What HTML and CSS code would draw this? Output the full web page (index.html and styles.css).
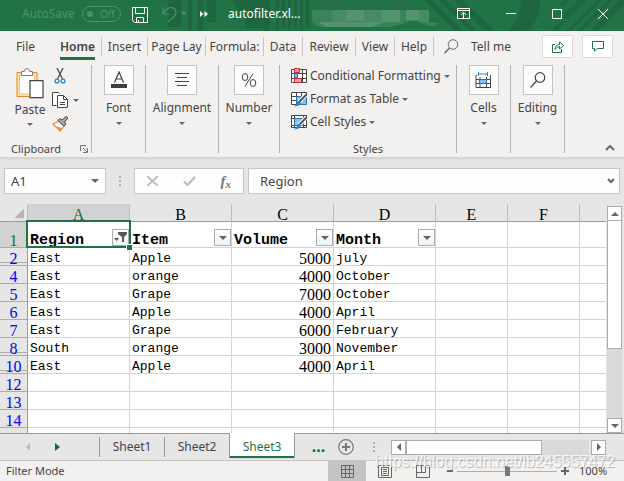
FILE: index.html
```html
<!DOCTYPE html>
<html lang="en">
<head>
<meta charset="utf-8">
<title>autofilter.xlsx</title>
<link rel="stylesheet" href="styles.css">
</head>
<body>
<div class="app">
  <header class="titlebar">
    <svg class="titlebar-art" width="624" height="31" viewBox="0 0 624 31" aria-hidden="true">
      <g fill="#1e6540">
        <path d="M168 0h13v27h-13zM188 0h4v31h-4zM198 0h5v31h-5zM207 0h9v22h-9zM232 0h32v28h-16zM264 0h6v31h-6zM276 0h3v31h-3zM282 0h3v28h-3zM288 0h3v31h-3zM294 0h3v28h-3zM300 0h3v31h-3zM306 0h3v28h-3z"/>
        <path d="M424 0h8l31 31h-8zM439 0h7l31 31h-7zM454 0h8l33 31h-9zM521 0h19q0 20-12 31h-19q12-14 12-31z"/>
        <path d="M597 0h5l-31 31h-5zM608 0h5l-31 31h-6zM619 0h5v5l-26 26h-7zM565 0h4l-7 7h-5zM578 0h8l-18 18h-8zM551 31l10-10h5l-9 10z"/>
      </g>
      <g>
        <path fill="#3b845b" d="M312 10h117v12l10 1q-4 4-10 3-8-3-13-5-8 0-14 3l-12 3h-68q-8-2-10-6z"/>
        <path fill="#56936f" d="M346 10h18v11h-18zM382 10h18v12h-18zM406 10h13v10h-13z"/>
        <path fill="#458b64" d="M332 10h14v12h-14zM364 10h18v12h-18zM419 10h10v12h-10z"/>
        <path fill="#529370" d="M318 22h66l-12 5h-46z"/>
        <path fill="#286f49" d="M324 0h20v9h-20zM358 0h15v9h-15zM393 0h14v9h-14z"/>
      </g>
    </svg>
    <div class="autosave"><span>AutoSave</span><button class="toggle" type="button" disabled><i class="knob"></i>Off</button></div>
    <button class="bare save" type="button" aria-label="Save">
      <svg width="16" height="16" viewBox="0 0 16 16" fill="none" stroke="#fff"><path d="M.5 .5h15v15h-13l-2-2zM3.500 .5v6h9v-6M4.500 15.500v-5h7v5M6.500 13v2.500"/></svg>
    </button>
    <button class="bare undo" type="button" disabled aria-label="Undo">
      <svg width="25" height="17" viewBox="0 0 25 17" fill="none" stroke="#509069"><path stroke-width="1.200" d="M1 1v7h7M1.300 7.500Q5 1 10 1.600q4 .8 4 5Q14 10 6 16"/><path fill="#509069" stroke="none" d="M19 6h6l-3 3z"/></svg>
    </button>
    <button class="bare more" type="button" aria-label="More commands">
      <svg width="8" height="6" viewBox="0 0 8 6" fill="#fff"><path d="M0 0l3.500 3L0 6zM4.500 0L8 3 4.500 6z"/></svg>
    </button>
    <span class="doc">autofilter.xl...</span>
    <div class="window-buttons">
      <button class="bare" type="button" aria-label="Ribbon display options"><svg width="13" height="11" viewBox="0 0 13 11" fill="none" stroke="#fff"><path d="M.5 .5h12v10H.5zM.5 2.500h12M6.500 10V4.500M4 6.800l2.500-2.500L9 6.800"/></svg></button>
      <button class="bare" type="button" aria-label="Minimize"><svg width="10" height="10" viewBox="0 0 10 10" stroke="#fff"><path d="M0 4.500h10"/></svg></button>
      <button class="bare" type="button" aria-label="Maximize"><svg width="10" height="10" viewBox="0 0 10 10" fill="none" stroke="#fff"><path d="M.5 .5h9v9h-9z"/></svg></button>
      <button class="bare" type="button" aria-label="Close"><svg width="10" height="10" viewBox="0 0 10 10" stroke="#fff"><path d="M0 0l10 10M10 0L0 10"/></svg></button>
    </div>
  </header>

  <nav class="tabs">
    <button class="tab file" type="button">File</button>
    <button class="tab active" type="button"><span>Home</span></button>
    <button class="tab" type="button">Insert</button>
    <button class="tab" type="button">Page Lay</button>
    <button class="tab" type="button">Formula:</button>
    <button class="tab" type="button">Data</button>
    <button class="tab" type="button">Review</button>
    <button class="tab" type="button">View</button>
    <button class="tab" type="button">Help</button>
    <button class="tellme" type="button">
      <svg width="15" height="15" viewBox="0 0 15 15" fill="none" stroke="#666"><circle cx="9" cy="5.500" r="4.800"/><path stroke-width="1.400" d="M5.500 9L.5 14.300"/></svg>
      Tell me
    </button>
    <div class="actions">
      <button class="pill" type="button" aria-label="Share"><svg width="12" height="13" viewBox="0 0 12 13" fill="none" stroke="#217346"><path d="M3 4.500H.5v8h9V9M3 9.500q0-4.500 4.500-5V2l4 3.500L7.500 9V6.500Q5 6.500 3 9.500z"/></svg></button>
      <button class="pill" type="button" aria-label="Comments"><svg width="12" height="11" viewBox="0 0 12 11" fill="none" stroke="#217346"><path d="M.5 .5h11v7H5.500L2.500 10V7.500h-2z"/></svg></button>
    </div>
  </nav>

  <section class="ribbon">
    <div class="group clipboard">
      <div class="clip-body">
        <button class="bare paste" type="button">
          <svg width="28" height="31" viewBox="0 0 28 31"><path fill="#fde3a6" stroke="#e8832c" d="M1 4.500h20v24H1z"/><path fill="#fcfcfb" stroke="#f3c476" d="M3.500 7h15v19h-15z"/><path fill="#fff" stroke="#777" d="M5.500 7.500v-4h3q0-3 2.500-3t2.500 3h3v4z"/><path fill="#fff" stroke="#444" stroke-width="1.200" d="M14 12.600h13v17H14z"/></svg>
          <span>Paste</span><i class="caret"></i>
        </button>
        <div class="clip-tools">
          <button class="bare" type="button" aria-label="Cut"><svg width="16" height="16" viewBox="0 0 16 16" fill="none"><path stroke="#555" stroke-width="1.400" d="M5 0l5.500 11M11 0L5.500 11"/><circle cx="5" cy="13" r="1.900" stroke="#1e86cc" stroke-width="1.300"/><circle cx="11" cy="13" r="1.900" stroke="#1e86cc" stroke-width="1.300"/></svg></button>
          <button class="bare" type="button" aria-label="Copy"><svg width="17" height="16" viewBox="0 0 17 16" fill="#fff" stroke="#444"><path d="M4.500 13.500h-4V.5h6l1 1"/><path d="M5.500 3.500h6l4 4v8h-10z"/><path d="M11.500 3.500v4h4M8 10.500h5M8 12.500h5" fill="none"/></svg><i class="caret"></i></button>
          <button class="bare" type="button" aria-label="Format painter"><svg width="17" height="16" viewBox="0 0 17 16"><path fill="#fff" stroke="#ea873c" stroke-width="1.200" d="M1 8l6-3 5 5-4 5z"/><path fill="#ee924b" d="M3 10l7 2-2 3z"/><path fill="#aaa" stroke="#444" d="M6 4.500l2-2 2 1.500L14 .5 16 2l-3.500 4 1.500 2-2 2z"/></svg></button>
        </div>
      </div>
      <div class="caption"><span>Clipboard</span><svg width="8" height="8" viewBox="0 0 8 8" fill="none" stroke="#777"><path d="M.5 6V.5H6M3 3l4 4M7.500 3v4.500H3"/></svg></div>
    </div>
    <div class="group"><button class="bare big" type="button">
      <span class="tile"><svg width="16" height="18" viewBox="0 0 16 18"><path fill="none" stroke="#444" stroke-width="1.200" d="M3.500 11.500L8 1l4.500 10.500M5 8h6"/><path fill="#3f3f3f" d="M0 13h16v4H0z"/></svg></span>
      <span>Font</span><i class="caret"></i></button></div>
    <div class="group"><button class="bare big" type="button">
      <span class="tile"><svg width="14" height="14" viewBox="0 0 14 14" stroke="#444"><path d="M0 .5h14M2 4.500h10M0 8.500h14M2 12.500h10"/></svg></span>
      <span>Alignment</span><i class="caret"></i></button></div>
    <div class="group"><button class="bare big" type="button">
      <span class="tile"><svg width="16" height="16" viewBox="0 0 16 16" fill="none" stroke="#444"><ellipse cx="4" cy="5" rx="2.800" ry="3.500"/><ellipse cx="12" cy="11" rx="2.800" ry="3.500"/><path d="M12 1.500L4 14.500"/></svg></span>
      <span>Number</span><i class="caret"></i></button></div>
    <div class="group styles">
      <div class="style-list">
        <button class="bare" type="button"><svg width="16" height="16" viewBox="0 0 16 16"><path fill="#fff" stroke="#444" d="M.5 1.500h15v13H.5zM0 5.500h16M0 10.500h16M3.500 1v14M11.500 1v14"/><path fill="#ff9ca0" stroke="#d92b2f" d="M3.500 .5h5v4h-5zM3.500 10.500h7v4h-7z"/><path fill="#83beec" stroke="#1e74b8" d="M3.500 5.500h3v4h-3z"/></svg>Conditional Formatting<i class="caret"></i></button>
        <button class="bare" type="button"><svg width="16" height="16" viewBox="0 0 16 16"><path fill="#fff" stroke="#444" d="M.5 1.500h15v12H.5zM0 5.500h16M0 9.500h16M5.500 1v12M10.500 1v12"/><path fill="#83beec" stroke="#2776bb" d="M5.500 5.500h10v8h-10z"/><path stroke="#fff" stroke-width="4" d="M8 11l7-7"/><path stroke="#555" stroke-width="2" d="M8 11l8-8"/><path fill="#2483cd" d="M2 15q4 0 4-4l3-1 1 2q-2 4-8 3z"/></svg>Format as Table<i class="caret"></i></button>
        <button class="bare" type="button"><svg width="16" height="16" viewBox="0 0 16 16"><path fill="#fff" stroke="#444" d="M.5 1.500h15v12H.5zM0 4.500h16M3.500 1v12M12.500 1v12M0 11.500h16"/><path fill="#83beec" stroke="#2776bb" d="M3.500 4.500h9v7h-9z"/><path stroke="#fff" stroke-width="4" d="M8 11l7-7"/><path stroke="#555" stroke-width="2" d="M8 11l8-8"/><path fill="#2483cd" d="M2 15q4 0 4-4l3-1 1 2q-2 4-8 3z"/></svg>Cell Styles<i class="caret"></i></button>
      </div>
      <div class="caption"><span>Styles</span></div>
    </div>
    <div class="group"><button class="bare big" type="button">
      <span class="tile"><svg width="17" height="17" viewBox="0 0 17 17"><path fill="#fff" stroke="#444" d="M1 3.500h14.500v12H1zM1 7.500h15M1 11.500h15M5 3v13M11.500 3v13"/><path fill="#fdfdfd" d="M2 0h13v5H2z"/><path stroke="#1e86cc" d="M3.500 0v4M12.500 0v4M3.500 2h9"/><path fill="#83beec" stroke="#1e74b8" d="M4.500 7.500h7v4h-7z"/></svg></span>
      <span>Cells</span><i class="caret"></i></button></div>
    <div class="group"><button class="bare big" type="button">
      <span class="tile"><svg width="16" height="16" viewBox="0 0 16 16" fill="none" stroke="#444" stroke-width="1.200"><circle cx="10" cy="5.500" r="4.800"/><path d="M6.500 9L.5 15.500"/></svg></span>
      <span>Editing</span><i class="caret"></i></button></div>
    <button class="bare collapse" type="button" aria-label="Collapse ribbon"><svg width="10" height="6" viewBox="0 0 10 6" fill="none" stroke="#666" stroke-width="2"><path d="M1 5l4-4 4 4"/></svg></button>
  </section>

  <section class="formula-row">
    <div class="box name"><input type="text" value="A1" aria-label="Name box"><i class="caret large"></i></div>
    <i class="dots"></i>
    <div class="box fx">
      <button class="bare" type="button" aria-label="Cancel"><svg width="11" height="10" viewBox="0 0 11 10" stroke="#bbb" stroke-width="1.800"><path d="M0 0l11 10M11 0L0 10"/></svg></button>
      <button class="bare" type="button" aria-label="Enter"><svg width="13" height="10" viewBox="0 0 13 10" fill="none" stroke="#bbb" stroke-width="2.200"><path d="M1 5.500L4.500 9 12 1"/></svg></button>
      <button class="bare fn" type="button" aria-label="Insert function"><em>f</em><sub>x</sub></button>
    </div>
    <div class="box formula"><input type="text" value="Region" aria-label="Formula bar"><svg width="8" height="6" viewBox="0 0 8 6" fill="none" stroke="#666" stroke-width="2"><path d="M1 1l3 3 3-3"/></svg></div>
  </section>

  <main class="sheet">
    <div class="grid-view">
      <table class="grid">
        <colgroup><col class="c-row"><col class="c-wide"><col class="c-wide"><col class="c-wide"><col class="c-wide"><col class="c-std"><col class="c-std"><col></colgroup>
        <thead><tr><th class="corner"><i></i></th><th class="on">A</th><th>B</th><th>C</th><th>D</th><th>E</th><th>F</th><th></th></tr></thead>
        <tbody>
          <tr class="fields"><th class="on">1</th>
            <td class="cursor"><div class="field">Region<button class="filter" type="button" aria-label="Filter Region"><svg width="13" height="11" viewBox="0 0 13 11" fill="#555"><path d="M4 0h9v2l-3 3v5H8V5L4 2zM0 6h5L2.500 9z"/></svg></button></div></td>
            <td><div class="field">Item<button class="filter" type="button" aria-label="Filter Item"><i class="caret large"></i></button></div></td>
            <td><div class="field">Volume<button class="filter" type="button" aria-label="Filter Volume"><i class="caret large"></i></button></div></td>
            <td><div class="field">Month<button class="filter" type="button" aria-label="Filter Month"><i class="caret large"></i></button></div></td>
            <td></td><td></td><td></td></tr>
          <tr class="gap"><th>2</th><td>East</td><td>Apple</td><td class="num">5000</td><td>july</td><td></td><td></td><td></td></tr>
          <tr><th>4</th><td>East</td><td>orange</td><td class="num">4000</td><td>October</td><td></td><td></td><td></td></tr>
          <tr><th>5</th><td>East</td><td>Grape</td><td class="num">7000</td><td>October</td><td></td><td></td><td></td></tr>
          <tr><th>6</th><td>East</td><td>Apple</td><td class="num">4000</td><td>April</td><td></td><td></td><td></td></tr>
          <tr><th>7</th><td>East</td><td>Grape</td><td class="num">6000</td><td>February</td><td></td><td></td><td></td></tr>
          <tr class="gap"><th>8</th><td>South</td><td>orange</td><td class="num">3000</td><td>November</td><td></td><td></td><td></td></tr>
          <tr class="gap"><th>10</th><td>East</td><td>Apple</td><td class="num">4000</td><td>April</td><td></td><td></td><td></td></tr>
          <tr><th>12</th><td></td><td></td><td></td><td></td><td></td><td></td><td></td></tr>
          <tr><th>13</th><td></td><td></td><td></td><td></td><td></td><td></td><td></td></tr>
          <tr><th>14</th><td></td><td></td><td></td><td></td><td></td><td></td><td></td></tr>
          <tr><th></th><td></td><td></td><td></td><td></td><td></td><td></td><td></td></tr>
        </tbody>
      </table>
    </div>
    <div class="vscroll">
      <button class="arrow" type="button" aria-label="Scroll up"><i class="caret large up"></i></button>
      <div class="vthumb"></div>
      <div class="vtrack"></div>
      <button class="arrow" type="button" aria-label="Scroll down"><i class="caret large"></i></button>
    </div>
  </main>

  <section class="sheetbar">
    <div class="sheet-nav">
      <button class="bare" type="button" disabled aria-label="Previous sheet"><svg width="4" height="8" viewBox="0 0 4 8" fill="#bbb"><path d="M4 0v8L0 4z"/></svg></button>
      <button class="bare" type="button" aria-label="Next sheet"><svg width="5" height="8" viewBox="0 0 5 8" fill="#0f6b38"><path d="M0 0v8l5-4z"/></svg></button>
    </div>
    <button class="sheet-tab" type="button">Sheet1</button>
    <button class="sheet-tab" type="button">Sheet2</button>
    <button class="sheet-tab current" type="button">Sheet3</button>
    <button class="bare ellipsis" type="button">...</button>
    <button class="bare" type="button" aria-label="New sheet"><svg width="16" height="16" viewBox="0 0 16 16" fill="none" stroke="#777"><circle cx="8" cy="8" r="7.300" stroke-width="1.200"/><path stroke-width="2" d="M8 4v8M4 8h8"/></svg></button>
    <i class="dots"></i>
    <div class="hscroll">
      <button class="arrow" type="button" aria-label="Scroll left"><svg width="4" height="8" viewBox="0 0 4 8" fill="#666"><path d="M4 0v8L0 4z"/></svg></button>
      <div class="hthumb"></div>
      <div class="htrack"></div>
      <button class="arrow" type="button" aria-label="Scroll right"><svg width="4" height="8" viewBox="0 0 4 8" fill="#666"><path d="M0 0v8l4-4z"/></svg></button>
    </div>
  </section>

  <footer class="status">
    <span class="mode">Filter Mode</span>
    <button class="view chosen" type="button" aria-label="Normal view"><svg width="13" height="13" viewBox="0 0 13 13" fill="none" stroke="#666"><path d="M.5 .5h12v12H.5zM0 4.500h13M0 8.500h13M4.500 0v13M8.500 0v13"/></svg></button>
    <button class="view" type="button" aria-label="Page layout view"><svg width="14" height="13" viewBox="0 0 14 13" fill="none" stroke="#666"><path d="M.5 .5h13v12H.5zM3.500 2.500h7v8h-7zM5 4.500h4M5 6.500h4M5 8.500h4"/></svg></button>
    <button class="view" type="button" aria-label="Page break view"><svg width="14" height="13" viewBox="0 0 14 13" fill="none" stroke="#666"><path d="M.5 .5h13v12H.5zM5.500 .5v7h4v-7M.5 7.500h5"/></svg></button>
    <div class="zoom">
      <svg width="6" height="2" viewBox="0 0 6 2" aria-hidden="true"><path fill="#666" d="M0 0h6v2H0z"/></svg>
      <input type="range" min="0" max="100" value="50" aria-label="Zoom">
      <svg width="8" height="8" viewBox="0 0 8 8" aria-hidden="true"><path fill="#666" d="M3 0h2v3h3v2H5v3H3V5H0V3h3z"/></svg>
      <span class="percent">100%</span>
    </div>
    <span class="watermark">https://blog.csdn.net/lb245557472</span>
  </footer>
</div>
</body>
</html>
```
FILE: styles.css
```css
* { box-sizing: border-box; }

body {
  margin: 0;
  font: 12px/16px "Noto Sans", "Open Sans", sans-serif;
  color: #444;
  background: #f3f1ef;
}

button, input { font: inherit; color: inherit; margin: 0; }
button { padding: 0; border: 0; background: none; white-space: nowrap; }
svg { display: block; flex: none; }
.bare { display: flex; align-items: center; justify-content: center; }

.app { display: flex; flex-direction: column; height: 100vh; overflow: hidden; }

.caret {
  flex: none;
  border: solid transparent;
  border-width: 3px 3px 0;
  border-top-color: #666;
}
.caret.large { border-width: 4px 4px 0; border-top-color: #666; }
.caret.up { transform: rotate(180deg); }

.dots {
  width: 2px;
  height: 10px;
  background: repeating-linear-gradient(#b0b0b0 0 2px, transparent 2px 4px);
}

/* Title bar */
.titlebar {
  position: relative;
  flex: none;
  display: flex;
  align-items: center;
  height: 31px;
  padding: 0 16px 4px 22px;
  color: #fff;
  background: #217346;
  overflow: hidden;
}
.titlebar-art { position: absolute; right: 0; top: 0; }
.titlebar > :not(.titlebar-art) { position: relative; }
.autosave { display: flex; align-items: center; gap: 7px; width: 110px; color: #509069; }
.toggle {
  display: flex;
  align-items: center;
  gap: 7px;
  height: 16px;
  padding: 0 5px 0 4px;
  border: 1px solid #509069;
  border-radius: 8px;
  font-size: 10px;
}
.knob { width: 6px; height: 6px; border-radius: 50%; background: #509069; }
.save { margin-top: 2px; }
.undo { margin: 2px 0 0 14px; }
.more { margin-left: 13px; }
.doc { margin-left: 20px; }
.window-buttons { display: flex; gap: 36px; margin-left: auto; }

/* Tabs */
.tabs {
  flex: none;
  display: grid;
  grid-template-columns: 51px 51px 46px 58px 58px 39px 53px 39px 39px 1fr auto;
  align-items: center;
  height: 31px;
}
.tab { height: 19px; border-right: 1px solid #c8c6c4; overflow: hidden; }
.tab.file { border: 0; }
.tab.active { height: 27px; font-weight: 600; border: 0; padding: 4px 0 0 2px; background: linear-gradient(#c8c6c4, #c8c6c4) right 4px / 1px 19px no-repeat; }
.tab.active span { display: inline-block; height: 23px; padding-top: 2px; border-bottom: 3px solid #217346; }
.tellme { display: flex; align-items: center; gap: 12px; padding-left: 10px; }
.actions { display: flex; gap: 9px; padding-right: 11px; }
.pill {
  display: flex;
  align-items: center;
  justify-content: center;
  width: 31px;
  height: 23px;
  background: #fff;
  border: 1px solid #dddbd9;
  border-radius: 2px;
}

/* Ribbon */
.ribbon {
  flex: none;
  display: grid;
  grid-template-columns: 92px 54px 73px 61px 177px 54px 54px 1fr;
  height: 95px;
  padding: 3px 0 4px;
}
.group {
  display: flex;
  flex-direction: column;
  border-right: 1px solid #b4b2b0;
}
.big { flex-direction: column; }
.tile {
  display: flex;
  align-items: center;
  justify-content: center;
  width: 30px;
  height: 30px;
  margin-bottom: 5px;
  background: #fdfdfc;
  border: 1px solid #c6c4c2;
}
.big .caret { margin-top: 6px; }
.clip-body { display: flex; gap: 8px; padding: 3px 0 0 16px; }
.paste { flex-direction: column; justify-content: flex-start; width: 28px; }
.paste span { margin-top: 3px; }
.paste .caret { margin-top: 5px; }
.clip-tools { display: flex; flex-direction: column; align-items: flex-start; gap: 8px; }
.clip-tools .bare { gap: 4px; }
.caption { display: flex; justify-content: center; align-items: center; gap: 18px; margin-top: auto; font-size: 11px; line-height: 15px; height: 15px; margin-bottom: -3px; }
.clipboard .caption { justify-content: space-between; padding: 0 3px 0 11px; }
.style-list { display: flex; flex-direction: column; align-items: flex-start; gap: 7px; padding: 3px 0 0 11px; }
.style-list .bare { gap: 3px; }
.collapse { align-self: end; justify-self: end; margin: 0 9px 2px 0; }

/* Formula bar */
.formula-row {
  flex: none;
  display: flex;
  align-items: center;
  gap: 4px;
  height: 47px;
  padding: 0 4px 0 4px;
  background: linear-gradient(#cfcfcf, #e6e6e6 4px);
}
.formula-row .dots { margin: 0 9px; }
.box { display: flex; align-items: center; height: 26px; background: #fdfdfd; border: 1px solid #c6c6c6; }
.box input { flex: 1; min-width: 0; border: 0; padding: 0; background: none; outline: 0; font-size: 13px; }
.name { width: 102px; padding: 0 6px; }
.fx { width: 110px; justify-content: space-between; padding: 0 12px; }
.fn { font: italic 700 15px/18px "Liberation Serif", serif; color: #777; }
.fn sub { font-size: 11px; line-height: 12px; align-self: flex-end; }
.formula { flex: 1; padding: 0 4px 0 11px; }

/* Worksheet */
.sheet { flex: 1; min-height: 0; display: flex; background: #e6e6e6; border-bottom: 1px solid #999; }
.grid-view { flex: 1; min-width: 0; overflow: hidden; background: #fff; }
.grid {
  width: 100%;
  table-layout: fixed;
  border-spacing: 0;
  font: 13px/13px "Liberation Mono", monospace;
  color: #000;
}
.c-row { width: 28px; }
.c-wide { width: 102px; }
.c-std { width: 72px; }
.grid td, .grid th { height: 18px; padding: 4px 2px 0; border: solid #d4d4d4; border-width: 0 1px 1px 0; font-weight: 400; white-space: nowrap; }
.grid td:last-child, .grid th:last-child { border-right: 0; }
.grid th, .grid .num { font: 16px/13px "Liberation Serif", serif; }
.grid thead th { background: #e6e6e6; border-color: #bdbdbd; border-bottom-color: #999; }
.grid tbody th { background: #e6e6e6; border-color: #ababab; border-right-color: #999; color: #0000ff; }
.grid th.on { background: #d2d2d2; color: #1e6b41; }
.grid tr.gap th { box-shadow: inset 0 -2px #e6e6e6, inset 0 -3px #ababab; }
.grid .num { text-align: right; }
.grid th.corner { padding: 0; }
.corner i { display: block; width: 10px; height: 10px; margin: 1px 3px 0 auto; background: linear-gradient(135deg, transparent 50%, #b4b4b4 50%); }
.grid .fields td, .grid .fields th { height: 26px; vertical-align: bottom; }
.fields .field { display: flex; align-items: flex-end; justify-content: space-between; font-size: 15px; font-weight: 700; }
.filter {
  display: flex;
  align-items: center;
  justify-content: center;
  width: 17px;
  height: 17px;
  margin: 0 -2px 1px 0;
  background: linear-gradient(#fff, #eef1f6);
  border: 1px solid #a5adb8;
}
.cursor { position: relative; }
.cursor::before { content: ""; position: absolute; inset: -2px -2px -1px -2px; border: 2px solid #217346; pointer-events: none; }
.cursor::after { content: ""; position: absolute; right: -3px; bottom: -3px; width: 5px; height: 5px; background: #217346; outline: 1px solid #fff; }

.vscroll { display: flex; flex-direction: column; width: 17px; padding: 2px 2px 0 0; margin-left: 1px; background: #e6e6e6; }
.arrow { display: flex; align-items: center; justify-content: center; flex: none; width: 15px; height: 15px; background: #fff; border: 1px solid #ababab; }
.vthumb { flex: 129; background: #fff; border: 1px solid #ababab; border-top: 0; }
.vtrack { flex: 70; background: #dadada; }

/* Sheet tabs */
.sheetbar { flex: none; display: flex; align-items: center; height: 27px; background: #e6e6e6; border-bottom: 1px solid #c6c6c6; }
.sheet-nav { display: flex; gap: 25px; width: 99px; padding-left: 26px; }
.sheet-tab { width: 65px; height: 20px; border-left: 1px solid #999; }
.sheet-tab.current { width: 66px; height: 25px; margin: -1px 0 0; padding-top: 2px; align-self: flex-start; background: #fff; border: solid #999; border-width: 0 1px; box-shadow: inset 0 -2px #217346; color: #217346; }
.ellipsis { width: 43px; padding: 0 0 3px 4px; font-size: 16px; font-weight: 700; color: #0f6b38; }
.sheetbar .dots { margin: 0 16px 0 19px; }
.hscroll { flex: 1; display: flex; padding-right: 18px; }
.hthumb { flex: 137; background: #fff; border: 1px solid #ababab; }
.htrack { flex: 48; background: #dadada; margin-right: 2px; }

/* Status bar */
.status { position: relative; flex: none; display: flex; align-items: center; height: 20px; font-size: 11px; background: #f3f1ef; }
.mode { flex: 1; padding-left: 6px; }
.view { display: flex; align-items: center; justify-content: center; width: 38px; height: 20px; }
.view.chosen { background: #c6c4c2; }
.zoom { display: flex; align-items: center; gap: 4px; width: 182px; padding-left: 5px; }
.zoom input { -webkit-appearance: none; appearance: none; width: 100px; height: 10px; background: linear-gradient(#b0aeac, #b0aeac) center / 100% 1px no-repeat; }
.zoom input::-webkit-slider-thumb { -webkit-appearance: none; width: 5px; height: 10px; background: #777; }
.percent { margin-left: 6px; }
.watermark {
  position: absolute;
  right: 9px;
  bottom: 11px;
  font: 16px/16px "Liberation Sans", sans-serif;
  color: rgba(255, 255, 255, 0.8);
  text-shadow: 1px 1px 1px rgba(120, 120, 120, 0.5);
  pointer-events: none;
}
```
